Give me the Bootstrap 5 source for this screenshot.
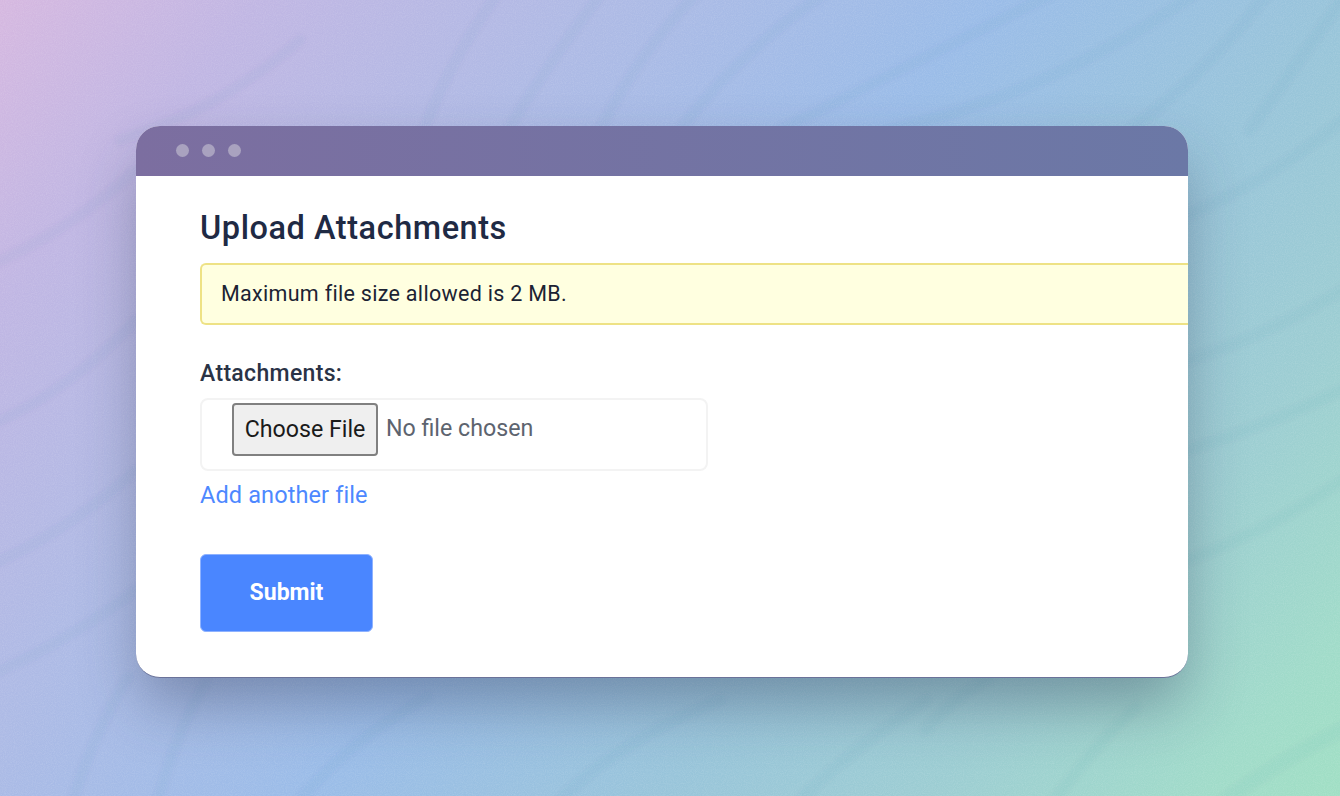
<!DOCTYPE html>
<html lang="en">

<head>
    <meta charset="UTF-8">
    <meta name="viewport" content="width=device-width, initial-scale=1.0">
    <title>Upload Attachments</title>
    <link href="https://cdn.jsdelivr.net/npm/bootstrap@5.3.0/dist/css/bootstrap.min.css" rel="stylesheet">
    <style>
        html, body { height: 100%; }
        body {
            font-family: Roboto, "Liberation Sans", sans-serif;
            overflow: hidden;
            padding: 126px 152px 118px 136px;
            background-color: #a5bde4;
            background-image:
                url("data:image/svg+xml,%3Csvg xmlns='http://www.w3.org/2000/svg' width='1340' height='796'%3E%3Cfilter id='n'%3E%3CfeTurbulence type='fractalNoise' baseFrequency='.9' numOctaves='2'/%3E%3CfeColorMatrix values='0 0 0 0 1 0 0 0 0 1 0 0 0 0 1 0 0 0 .6 -.2'/%3E%3C/filter%3E%3Cfilter id='b'%3E%3CfeGaussianBlur stdDeviation='2'/%3E%3C/filter%3E%3Cg fill='none' stroke='%23405a90' stroke-opacity='.035' stroke-width='12' stroke-linecap='round' filter='url(%23b)'%3E%3Cpath d='M424 130Q450 60 500-10'/%3E%3Cpath d='M508 130Q550 60 604-10'/%3E%3Cpath d='M600 130Q640 50 700-10'/%3E%3Cpath d='M680 130Q740 50 830-10'/%3E%3Cpath d='M780 130Q900 70 1060-10'/%3E%3Cpath d='M890 130Q1060 90 1200-10'/%3E%3Cpath d='M1130 130Q1210 70 1270-10'/%3E%3Cpath d='M1250 130Q1300 60 1345-5'/%3E%3Cpath d='M120 140Q220 110 300 40'/%3E%3Cpath d='M73 800Q95 730 128 677'/%3E%3Cpath d='M158 800Q175 735 205 683'/%3E%3Cpath d='M300 800Q350 740 427 697'/%3E%3Cpath d='M560 800Q620 740 720 700'/%3E%3Cpath d='M800 800Q850 750 926 700'/%3E%3Cpath d='M926 730Q950 700 990 677'/%3E%3Cpath d='M1055 800Q1090 750 1136 707'/%3E%3Cpath d='M1225 800Q1280 760 1345 728' stroke-width='15'/%3E%3Cpath d='M-5 263Q70 230 136 170'/%3E%3Cpath d='M-5 423Q70 390 136 320'/%3E%3Cpath d='M-5 563Q70 530 136 470'/%3E%3Cpath d='M-5 673Q70 640 136 590'/%3E%3Cpath d='M1188 215Q1270 180 1345 118'/%3E%3Cpath d='M1188 360Q1270 335 1345 288'/%3E%3Cpath d='M1188 450Q1270 425 1345 388'/%3E%3Cpath d='M1188 560Q1270 530 1345 478'/%3E%3C/g%3E%3Crect width='1340' height='796' filter='url(%23n)' opacity='.35'/%3E%3C/svg%3E"),
                linear-gradient(131deg, #d6b8e0 0, #c0b6e3 13%, #aebae5 30%, #9abce8 49%, #98c4da 66%, #9ccdd2 80%, #a0dbc9 93%, #a0dfc4 100%);
        }
        .app-window {
            height: 552px;
            border-radius: 24px;
            overflow: hidden;
            background: #fff;
            border-bottom: 1px solid #6a7299;
            box-shadow: 0 30px 60px -5px rgba(40, 50, 80, .38);
        }
        .app-titlebar {
            height: 50px;
            padding: 0 0 2px 40px;
            gap: 13px;
            background: linear-gradient(90deg, #7c6ea0, #6b78a6);
        }
        .app-dot {
            width: 13px;
            height: 13px;
            border-radius: 50%;
            background: #a9a2bf;
        }
        .app-body { padding: 31px 0 0 64px; color: #1f2a44; }
        .page-title { font-size: 32.5px; font-weight: 500; line-height: 42px; letter-spacing: .55px; margin: 0 0 14px; }
        .size-note {
            height: 62px;
            margin-right: -4px;
            padding: 1px 0 0 19px;
            border: 2px solid #eee285;
            border-right: 0;
            border-radius: 6px 0 0 6px;
            background: #ffffe0;
            color: #1c2333;
            font-size: 21.5px;
            letter-spacing: .3px;
        }
        .field-label { font-size: 23px; font-weight: 500; line-height: 28px; letter-spacing: .33px; margin: 35px 0 10px; color: #2a3346; }
        .file-box {
            width: 508px;
            height: 73px;
            padding: 3px 0 0 30px;
            border: 2px solid #f3f3f3;
            border-radius: 8px;
        }
        .file-btn {
            width: 146px;
            height: 53px;
            padding: 0 0 1px;
            border: 2px solid #808080;
            border-radius: 4px;
            background: #efefef;
            color: #1a1a1a;
            font-size: 23.2px;
        }
        .file-status { font-size: 23.2px; color: #5d646f; margin-left: 8px; }
        .add-file { font-size: 23.5px; line-height: 30px; letter-spacing: .12px; color: #4d88ff; text-decoration: none; margin-top: 9px; }
        .submit-btn {
            width: 173px;
            height: 78px;
            margin-top: 44px;
            border: 1px solid #8eb2ff;
            border-radius: 6px;
            background: #4a86ff;
            color: #fff;
            font-size: 23px;
            font-weight: 700;
        }
    </style>
</head>

<body>
    <div class="app-window">
        <div class="app-titlebar d-flex align-items-center">
            <span class="app-dot"></span>
            <span class="app-dot"></span>
            <span class="app-dot"></span>
        </div>
        <div class="app-body d-flex flex-column align-items-start">
            <h1 class="page-title">Upload Attachments</h1>
            <div class="size-note d-flex align-items-center align-self-stretch">Maximum file size allowed is 2 MB.</div>
            <label class="field-label">Attachments:</label>
            <div class="file-box d-flex align-items-start">
                <button type="button" class="file-btn">Choose File</button>
                <span class="file-status align-self-start mt-2">No file chosen</span>
            </div>
            <a href="#" class="add-file">Add another file</a>
            <button type="button" class="submit-btn">Submit</button>
        </div>
    </div>

    <script src="https://cdn.jsdelivr.net/npm/bootstrap@5.3.0/dist/js/bootstrap.bundle.min.js"></script>
</body>

</html>
